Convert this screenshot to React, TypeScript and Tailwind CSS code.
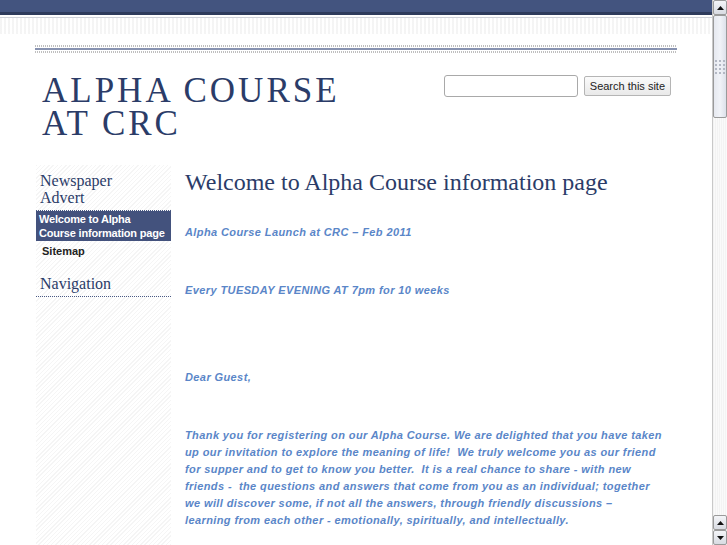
import React from 'react';

const serif = { fontFamily: '"Liberation Serif", "DejaVu Serif", serif' };
const sans = { fontFamily: '"Liberation Sans", Arial, sans-serif' };

function Scrollbar() {
  return (
    <div className="w-[15px] h-[545px] flex flex-col bg-[#f2f2f2] border-l border-[#c9c9c9] shrink-0">
      <div className="h-[15px] flex items-center justify-center bg-[linear-gradient(#f4f5f8,#d8dbe2)] border border-[#9a9a9a] rounded-[2px]">
        <svg width="7" height="4" viewBox="0 0 7 4"><path d="M3.5 0L7 4H0z" fill="#111" /></svg>
      </div>
      <div className="h-[103px] flex items-center justify-center bg-[linear-gradient(90deg,#e6e9f0,#f1f3f8,#dde1ea)] border border-[#9a9a9a] rounded-[2px]">
        <div className="grid grid-cols-3 gap-[2px]">
          {Array.from({ length: 12 }).map((_, i) => (
            <div key={i} className="w-[2px] h-[2px] bg-[#b3b8c4]" />
          ))}
        </div>
      </div>
      <div className="flex-1 bg-[repeating-linear-gradient(90deg,#f3f3f3_0px,#f3f3f3_1px,#fafafa_1px,#fafafa_2px)]" />
      <div className="h-[15px] flex items-center justify-center bg-[linear-gradient(#f4f5f8,#d8dbe2)] border border-[#9a9a9a] rounded-[2px]">
        <svg width="7" height="4" viewBox="0 0 7 4"><path d="M3.5 0L7 4H0z" fill="#111" /></svg>
      </div>
      <div className="h-[15px] flex items-center justify-center bg-[linear-gradient(#f4f5f8,#d8dbe2)] border border-[#9a9a9a] rounded-[2px]">
        <svg width="7" height="4" viewBox="0 0 7 4"><path d="M0 0H7L3.5 4z" fill="#111" /></svg>
      </div>
    </div>
  );
}

function App() {
  const para = 'mb-[12px] leading-[17px] min-h-[17px]';
  return (
    <div className="w-[727px] h-[545px] overflow-hidden flex bg-white">
      <div className="flex-1 flex flex-col min-w-0">
        {/* top bar */}
        <div className="h-[12px] bg-[#43547f]" />
        <div className="h-[3px] bg-[#2e3b5c]" />
        <div className="h-[2px] bg-white" />
        <div className="h-[1px] bg-[#d0d3da]" />
        <div className="h-[16px] bg-[repeating-linear-gradient(90deg,#f0f0f0_0px,#f0f0f0_2px,#ffffff_2px,#ffffff_4px)] opacity-70" />

        {/* header */}
        <div className="px-[35px] pt-[11px]">
          <div className="h-[2px] bg-[repeating-linear-gradient(90deg,#bfbfbf_0px,#bfbfbf_1px,#ffffff_1px,#ffffff_2px)]" />
          <div className="h-[1px]" />
          <div className="h-[2px] bg-[#8792b0]" />
          <div className="h-[1px]" />
          <div className="h-[2px] bg-[repeating-linear-gradient(90deg,#bfbfbf_0px,#bfbfbf_1px,#ffffff_1px,#ffffff_2px)]" />

          <div className="flex justify-between items-start pt-[21px]">
            <h1
              className="text-[35px] leading-[33px] tracking-[3px] text-[#2b3c68] pl-[7px]"
              style={serif}
            >
              ALPHA COURSE
              <br />
              AT CRC
            </h1>
            <div className="flex items-center gap-[6px] pt-[1px] pr-[6px]">
              <input
                type="text"
                className="w-[134px] h-[22px] border border-[#a9a9a9] rounded-[3px] bg-white"
              />
              <button
                className="h-[20px] px-[5px] border border-[#b5b5b5] rounded-[2px] bg-[linear-gradient(#fbfbfb,#e9e9e9)] text-[11px] text-[#222]"
                style={sans}
              >
                Search this site
              </button>
            </div>
          </div>
        </div>

        {/* body */}
        <div className="flex flex-1 pl-[36px] pt-[25px] gap-[14px]">
          <div className="w-[135px] shrink-0 bg-[repeating-linear-gradient(135deg,#f5f5f5_0px,#f5f5f5_1px,#ffffff_1px,#ffffff_3px)]">
            <div
              className="text-[16px] leading-[17px] text-[#2b3c68] px-[4px] pt-[7px] pb-[4px] border-b border-dotted border-[#4a5a84]"
              style={serif}
            >
              Newspaper
              <br />
              Advert
            </div>
            <div
              className="bg-[#43527d] text-white text-[11px] font-bold leading-[14px] px-[3px] py-[1px] tracking-[-0.2px]"
              style={sans}
            >
              Welcome to Alpha
              <br />
              Course information page
            </div>
            <div
              className="text-[11px] font-bold text-[#222] px-[6px] pt-[2px] leading-[16px]"
              style={sans}
            >
              Sitemap
            </div>
            <div
              className="mt-[16px] text-[16px] leading-[17px] text-[#2b3c68] px-[4px] pb-[4px] border-b border-dotted border-[#4a5a84]"
              style={serif}
            >
              Navigation
            </div>
          </div>

          <div className="flex-1 pr-[30px]">
            <h2
              className="text-[24px] leading-[26px] text-[#2b3c68] pt-[4px] mb-[29px]"
              style={serif}
            >
              Welcome to Alpha Course information page
            </h2>
            <div
              className="text-[11px] font-bold italic text-[#5a86c8] tracking-[0.4px]"
              style={sans}
            >
              <p className={para}>Alpha Course Launch at CRC – Feb 2011</p>
              <p className={para}>&nbsp;</p>
              <p className={para}>Every TUESDAY EVENING AT 7pm for 10 weeks</p>
              <p className={para}>&nbsp;</p>
              <p className={para}>&nbsp;</p>
              <p className={para}>Dear Guest,</p>
              <p className={para}>&nbsp;</p>
              <p className={para}>
                Thank you for registering on our Alpha Course. We are delighted that you have taken
                <br />
                up our invitation to explore the meaning of life!&nbsp; We truly welcome you as our friend
                <br />
                for supper and to get to know you better.&nbsp; It is a real chance to share - with new
                <br />
                friends -&nbsp; the questions and answers that come from you as an individual; together
                <br />
                we will discover some, if not all the answers, through friendly discussions –
                <br />
                learning from each other - emotionally, spiritually, and intellectually.
              </p>
            </div>
          </div>
        </div>
      </div>
      <Scrollbar />
    </div>
  );
}

export default App;
